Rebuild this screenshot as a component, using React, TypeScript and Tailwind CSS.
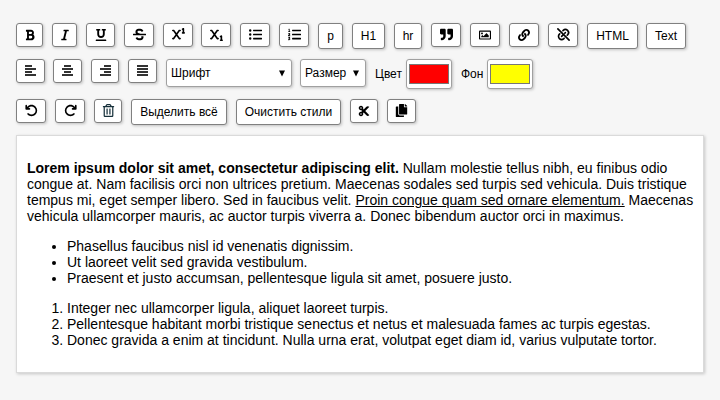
import type { ReactNode } from "react";
import { FaSuperscript, FaSubscript, FaArrowRotateLeft, FaArrowRotateRight } from "react-icons/fa6";
import { FaBold, FaItalic, FaUnderline, FaStrikethrough, FaListUl, FaListOl, FaQuoteRight, FaRegImage, FaLink, FaCut, FaCopy, FaRegTrashAlt } from "react-icons/fa";
import { TbLinkOff } from "react-icons/tb";

const frame = "shrink-0 rounded-[3px] border bg-white shadow-[1px_1px_3px_rgba(0,0,0,0.22)]";

function Tool({ w, children }: { w: string; children: ReactNode }) {
  return <button className={`${frame} ${w} flex h-6 items-center justify-center border-[#808080] pb-px text-[12px]`}>{children}</button>;
}

function TextTool({ w, children }: { w: string; children: ReactNode }) {
  return <button className={`${frame} ${w} flex h-[26px] items-center justify-center whitespace-nowrap border-[#808080] pb-px text-[12px] leading-4`}>{children}</button>;
}

// Four alternating bars, drawn on whole pixels; each entry is [x, width].
function AlignIcon({ bars }: { bars: [number, number][] }) {
  return (
    <svg width="11" height="11" viewBox="0 0 11 11" fill="#333" shapeRendering="crispEdges">
      {bars.map(([x, width], i) => <rect key={i} x={x} y={i * 3} width={width} height="2" />)}
    </svg>
  );
}

function Picker({ w, label }: { w: string; label: string }) {
  return (
    <button className={`${frame} ${w} flex h-7 items-center justify-between border-[#a0a0a0] pl-1 pr-[6px] text-[12px]`}>
      <span>{label}</span>
      <svg width="6" height="7" viewBox="0 0 6 7"><path d="M0 0.5H6L3 6.5Z" /></svg>
    </button>
  );
}

function Color({ label, fill, gap }: { label: string; fill: string; gap: string }) {
  return (
    <label className={`${gap} flex h-[30px] items-center text-[12px]`}>
      <span className="w-[26px] whitespace-nowrap">{label}</span>
      <span className={`${frame} flex h-[30px] w-[46px] items-center justify-center border-[#a0a0a0]`}>
        <span className={`h-5 w-10 border border-[#777] ${fill}`} />
      </span>
    </label>
  );
}

export default function App() {
  return (
    <div className="h-[400px] w-[720px] overflow-hidden bg-[#f6f6f6] pl-4 pt-[23px] font-['Liberation_Sans',Arial,sans-serif] text-black">
      <div className="flex h-9 items-start">
        <div className="flex gap-[9px]">
          <Tool w="w-[27px]"><FaBold size={12} /></Tool>
          <Tool w="w-[25px]"><FaItalic size={12} /></Tool>
          <Tool w="w-[29px]"><FaUnderline /></Tool>
          <Tool w="w-[30px]"><FaStrikethrough size={13} /></Tool>
          <Tool w="w-[30px]"><FaSuperscript size={13} /></Tool>
        </div>
        <div className="ml-2 flex gap-[9px]">
          <Tool w="w-[30px]"><FaSubscript size={13} /></Tool>
          <Tool w="w-[30px]"><FaListUl size={13} /></Tool>
          <Tool w="w-[30px]"><FaListOl size={13} /></Tool>
          <TextTool w="w-[25px]">p</TextTool>
          <TextTool w="w-[33px]">H1</TextTool>
          <TextTool w="w-[28px]">hr</TextTool>
          <Tool w="w-[30px]"><FaQuoteRight size={13} /></Tool>
          <Tool w="w-[30px]"><FaRegImage /></Tool>
          <Tool w="w-[30px]"><FaLink /></Tool>
          <Tool w="w-[30px]"><TbLinkOff size={15} strokeWidth={2.6} /></Tool>
          <TextTool w="w-[51px]">HTML</TextTool>
        </div>
        <div className="ml-2 flex"><TextTool w="w-[40px]">Text</TextTool></div>
      </div>
      <div className="flex h-10 items-start">
        <div className="flex gap-2">
          <Tool w="w-[29px]"><AlignIcon bars={[[0, 7], [0, 11], [0, 7], [0, 11]]} /></Tool>
          <Tool w="w-[29px]"><AlignIcon bars={[[2, 7], [0, 11], [2, 7], [0, 11]]} /></Tool>
        </div>
        <div className="ml-[9px] flex gap-[9px]">
          <Tool w="w-[28px]"><AlignIcon bars={[[4, 7], [0, 11], [4, 7], [0, 11]]} /></Tool>
          <Tool w="w-[29px]"><AlignIcon bars={[[0, 11], [0, 11], [0, 11], [0, 11]]} /></Tool>
          <Picker w="w-[126px]" label="Шрифт" />
        </div>
        <div className="ml-2"><Picker w="w-[66px]" label="Размер" /></div>
        <Color label="Цвет" fill="bg-[#ff0000]" gap="ml-[9px] [&>span:first-child]:w-[31px]" />
        <Color label="Фон" fill="bg-[#ffff00]" gap="ml-[9px]" />
      </div>
      <div className="flex h-9 items-start gap-[9px]">
        <Tool w="w-[30px]"><FaArrowRotateLeft size={13} /></Tool>
        <Tool w="w-[30px]"><FaArrowRotateRight size={13} /></Tool>
        <Tool w="w-[28px]"><FaRegTrashAlt className="text-[#16303a]" size={13} /></Tool>
        <TextTool w="w-[96px]">Выделить всё</TextTool>
        <TextTool w="w-[105px]">Очистить стили</TextTool>
        <Tool w="w-[28px]"><FaCut /></Tool>
        <Tool w="w-[29px]"><FaCopy size={13} /></Tool>
      </div>
      <main className="h-[238px] w-[688px] whitespace-nowrap border border-[#dadada] bg-white px-[10px] pt-6 text-[14px] leading-4 shadow-[1px_1px_3px_rgba(0,0,0,0.2)]">
        <p>
          <b>Lorem ipsum dolor sit amet, consectetur adipiscing elit.</b> Nullam molestie tellus nibh, eu finibus odio<br />
          congue at. Nam facilisis orci non ultrices pretium. Maecenas sodales sed turpis sed vehicula. Duis tristique<br />
          tempus mi, eget semper libero. Sed in faucibus velit. <u>Proin congue quam sed ornare elementum.</u> Maecenas<br />
          vehicula ullamcorper mauris, ac auctor turpis viverra a. Donec bibendum auctor orci in maximus.
        </p>
        <ul className="mt-[14px] list-disc pl-10">
          <li>Phasellus faucibus nisl id venenatis dignissim.</li>
          <li>Ut laoreet velit sed gravida vestibulum.</li>
          <li>Praesent et justo accumsan, pellentesque ligula sit amet, posuere justo.</li>
        </ul>
        <ol className="mt-[14px] list-decimal pl-10">
          <li>Integer nec ullamcorper ligula, aliquet laoreet turpis.</li>
          <li>Pellentesque habitant morbi tristique senectus et netus et malesuada fames ac turpis egestas.</li>
          <li>Donec gravida a enim at tincidunt. Nulla urna erat, volutpat eget diam id, varius vulputate tortor.</li>
        </ol>
      </main>
    </div>
  );
}
